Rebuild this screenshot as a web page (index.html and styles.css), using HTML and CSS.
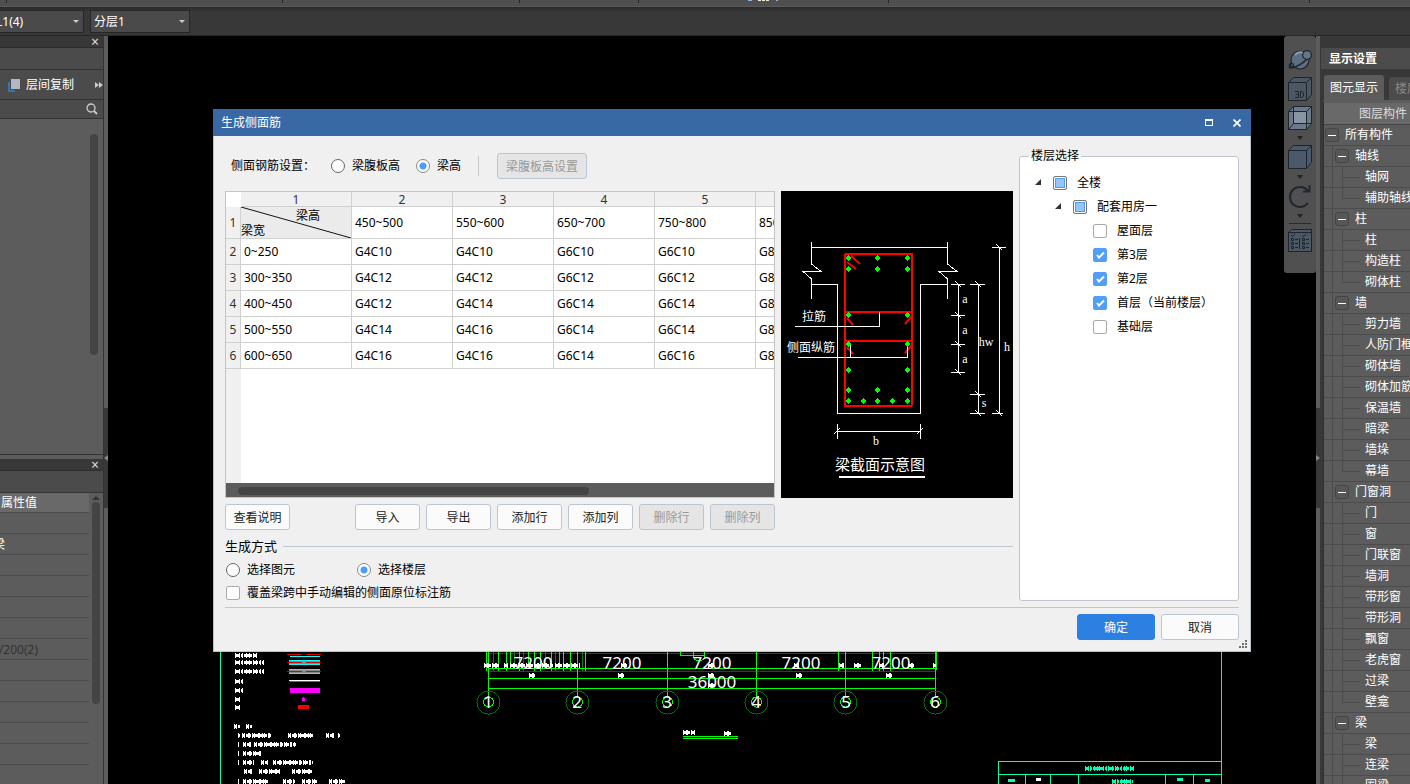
FILE: index.html
```html
<!DOCTYPE html>
<html lang="zh-CN">
<head>
  <meta charset="UTF-8">
  <title>生成侧面筋</title>
  <link rel="stylesheet" href="styles.css">
</head>
<body>

  <!-- Ribbon edge -->
  <div class="ribbon">
    <svg width="1410" height="7" shape-rendering="crispEdges">
      <path d="M6.5 0V3M282.5 0V3M519.5 0V3M638.5 0V3M888.5 0V3M1309.5 0V3" stroke="#222"/>
      <path d="M748 .5H752M776 .5H778" stroke="#8fb8dc"/>
      <path d="M758 .5H770" stroke="#f4ead0" stroke-dasharray="3 1"/>
    </svg>
  </div>

  <!-- Toolbar -->
  <div class="toolbar">
    <select class="tool-select" aria-label="构件">
      <option>L1(4)</option>
    </select>
    <select class="tool-select layer" aria-label="分层">
      <option>分层1</option>
    </select>
  </div>

  <div class="workspace">

    <!-- Left panels -->
    <aside class="left-side">
      <section class="component-panel">
        <div class="panel-bar"><button class="panel-close" aria-label="关闭">×</button></div>
        <div class="panel-strip"></div>
        <div class="copy-row">
          <button class="copy-btn">
            <svg width="12" height="14" viewBox="0 0 12 14">
              <path d="M1 4V13H7" fill="none" stroke="#3b73ad" stroke-width="2"/>
              <rect x="3" y="1" width="9" height="10" fill="#b4b6c2"/>
            </svg>
            层间复制
          </button>
          <button class="more-btn" aria-label="更多">
            <svg width="8" height="6" viewBox="0 0 8 6"><path d="M0 0L4 3L0 6ZM4 0L8 3L4 6Z" fill="#ccc"/></svg>
          </button>
        </div>
        <div class="search-row">
          <button class="search-btn" aria-label="搜索">
            <svg width="12" height="12" viewBox="0 0 12 12">
              <circle cx="5" cy="5" r="4" fill="none" stroke="#ccc" stroke-width="1.3"/>
              <path d="M8 8L11 11" stroke="#ccc" stroke-width="1.8"/>
            </svg>
          </button>
        </div>
        <div class="component-list"><div class="v-thumb"></div></div>
      </section>

      <section class="property-panel">
        <div class="panel-bar"><button class="panel-close" aria-label="关闭">×</button></div>
        <div class="panel-strip"></div>
        <div class="property-body">
          <ul class="property-list">
            <li class="property-head">属性值</li>
            <li></li>
            <li class="cut-name">梁</li>
            <li></li>
            <li></li>
            <li></li>
            <li></li>
            <li class="cut-value">/200(2)</li>
            <li></li>
            <li></li>
            <li></li>
            <li></li>
            <li></li>
            <li></li>
          </ul>
          <div class="property-scroll">
            <svg width="8" height="4" viewBox="0 0 8 4"><path d="M0 4L4 0L8 4Z" fill="#333"/></svg>
            <div class="v-thumb"></div>
          </div>
        </div>
      </section>
    </aside>

    <div class="splitter">
      <div class="grip">
        <svg width="4" height="6" viewBox="0 0 4 6"><path d="M4 0L0 3L4 6Z" fill="#888"/></svg>
      </div>
    </div>

    <!-- Drawing area -->
    <main class="canvas">
      <svg class="drawing" viewBox="108 36 1208 748" preserveAspectRatio="xMinYMin slice" shape-rendering="crispEdges" fill="none">
        <defs>
          <path id="notes" d="M234 726.5H240M246 726.5H252M238 735.5H240M242 735.5H271M288 735.5H313M326 735.5H334M338 735.5H340M238 744.5H239M243 744.5H251M254 744.5H296M238 753.5H239M243 753.5H261M238 762.5H239M243 762.5H254M261 762.5H268M273 762.5H313M244 771.5H252M259 771.5H280M292 771.5H312M238 781H239M243 781H269M283 781H295M302 781H317M329 781H345"/>
          <path id="legend" d="M235 655H257M235 662H264M235 671H264M235 681H244M235 690H244M235 699H240M235 707H241"/>
          <path id="dims" d="M484 665H500M504 665H508M510 665H553M555 665H580M621 665H627M708 665H714M794 665H799M839 665H844M854 665H861M879 665H884M908 665H914M933 665H936M708 685H716M529 675H535M618 675H624M708 675H714M796 675H802M886 675H892M683 732H695M724 733H732"/>
        </defs>

        <!-- sheet frame and title block -->
        <path d="M220.5 640V790M1221.5 640V790M998.5 790V761.5H1221M998 774.5H1221M1025.5 775V790M1050.5 775V790M1078.5 775V790M1165.5 775V790M1193.5 775V790" stroke="#00ffb8"/>
        <g stroke="#00ffb8">
          <path d="M1085 768H1135M1112 781H1133" stroke-width="3" stroke-dasharray="4 1 2 1 6 1"/>
          <path d="M1085 768H1135M1112 781H1133" stroke-width="5" stroke-dasharray="1 2 1 1 1 3"/>
          <path d="M1008 780H1015M1177 779H1183M1205 780H1210" stroke-width="3"/>
        </g>
        <path d="M1036 779.5H1041" stroke="#fff" stroke-width="3"/>

        <!-- axis grid -->
        <path d="M488 653.5H936M488 671.5H936" stroke="#006000"/>
        <path d="M493.5 640V671M514.5 640V668M523.5 640V671M545.5 640V668M555.5 640V671M582.5 640V671" stroke="#008000"/>
        <path d="M486.5 640V671M498.5 640V671M506.5 640V671M510.5 640V668M519.5 640V671M528.5 640V668M534.5 640V671M540.5 640V671M551.5 640V671M559.5 640V668M563.5 640V671M570.5 640V671M585.5 640V671M838.5 640V671M872.5 640V671M879.5 640V671M883.5 640V671M890.5 640V671" stroke="#0f0"/>
        <path d="M488 668.5H937M488 678.5H936M488 688.5H936M488.5 640V697M577.5 640V697M667.5 640V697M756.5 640V697M845.5 640V697M935.5 640V697" stroke="#0f0"/>
        <path d="M936 640V670" stroke="#0f0" stroke-width="2"/>
        <path d="M680.5 645V655.5H705" stroke="#0f0"/>
        <circle cx="699" cy="655" r="6" stroke="#0f0"/>
        <g stroke="#007000">
          <circle cx="488.500" cy="702.500" r="11.500"/><circle cx="577.500" cy="702.500" r="11.500"/><circle cx="667.500" cy="702.500" r="11.500"/>
          <circle cx="756.500" cy="702.500" r="11.500"/><circle cx="845.500" cy="702.500" r="11.500"/><circle cx="935.500" cy="702.500" r="11.500"/>
        </g>
        <g stroke="#0f0">
          <circle cx="488.500" cy="702" r="5"/><circle cx="577.500" cy="702" r="5"/><circle cx="667.500" cy="702" r="5"/>
          <circle cx="756.500" cy="702" r="5"/><circle cx="845.500" cy="702" r="5"/><circle cx="935.500" cy="702" r="5"/>
        </g>
        <g stroke="#fff">
          <use href="#dims" stroke-width="3" stroke-dasharray="4 1 2 1"/>
          <use href="#dims" stroke-width="5" stroke-dasharray="1 2 2 3"/>
        </g>
        <g class="axis-text">
          <text x="533" y="669">7200</text><text x="622" y="669">7200</text><text x="712" y="669">7200</text>
          <text x="801" y="669">7200</text><text x="891" y="669">7200</text><text x="712" y="688">36000</text>
          <text x="488" y="708">1</text><text x="577" y="708">2</text><text x="667" y="708">3</text>
          <text x="756" y="708">4</text><text x="846" y="708">5</text><text x="935" y="708">6</text>
        </g>
        <path d="M683 736.5H738M683 738.5H738" stroke="#0f0"/>

        <!-- legend -->
        <g stroke="#fff">
          <use href="#legend" stroke-width="3" stroke-dasharray="5 1 2 1"/>
          <use href="#legend" stroke-width="5" stroke-dasharray="1 3 1 2"/>
        </g>
        <path d="M289 662H320M289 671H320" stroke="#888" stroke-width="3"/>
        <path d="M290 656.5H320M289 660H320M289 664.5H320M289 669H320M289 673.5H320" stroke="#0ff"/>
        <path d="M287 654.5H322M287 662.5H322M287 671.5H322" stroke="#e00000" stroke-dasharray="15 4"/>
        <path d="M289 680.5H320" stroke="#fff"/>
        <path d="M290 681.5H320" stroke="#f0f"/>
        <path d="M290 690.5H320" stroke="#f0f" stroke-width="5"/>
        <path d="M302 699.5H305" stroke="#f0f" stroke-width="3"/>
        <path d="M303.5 697V699" stroke="#f0f"/>
        <path d="M298 707H309" stroke="#f00" stroke-width="4"/>
        <path d="M304 707.5H307" stroke="#500"/>

        <!-- notes -->
        <g stroke="#fff">
          <use href="#notes" stroke-width="3" stroke-dasharray="3 1 5 1 2 1"/>
          <use href="#notes" stroke-width="5" stroke-dasharray="1 1 1 3 2 2"/>
        </g>
      </svg>

      <!-- View tools -->
      <div class="view-tools">
        <button aria-label="动态观察">
          <svg width="24" height="24" viewBox="0 0 24 24" fill="#4e5f70" stroke="#1d242b" stroke-width="1.2">
            <circle cx="12" cy="12" r="9" fill="#5c6e80"/>
            <path d="M7 7Q11 3 15 5" stroke="#8d9baa" fill="none" stroke-width="2"/>
            <path d="M3 15Q-1 20 4 20Q12 18 19 11" fill="none" stroke-width="1.6"/>
            <circle cx="19" cy="7" r="4.300" fill="#64778a"/>
            <circle cx="4" cy="17" r="1.500"/>
          </svg>
        </button>
        <button aria-label="三维">
          <svg width="24" height="24" viewBox="0 0 24 24" fill="#4b5762" stroke="#1d242b">
            <path d="M.5 5.500L5.500 .5H23.500V17.500L18.500 23.500H.5Z"/>
            <path d="M.5 5.500H18.500V23.500M18.500 5.500L23.500 .5" fill="none"/>
            <path d="M7 14.500H10.500V20.500H7M8 17.500H10.500M12.500 14.500V20.500H14L15.500 19V16L14 14.500Z" fill="none"/>
          </svg>
        </button>
        <button aria-label="透视">
          <svg width="24" height="24" viewBox="0 0 24 24" fill="#8795a5" stroke="#1d242b">
            <path d="M.5 5.500L5.500 .5H23.500V17.500L18.500 23.500H.5Z" fill="#6b7a8a"/>
            <path d="M5.500 5.500H18.500V17.500H5.500Z" stroke="none"/>
            <path d="M.5 5.500H18.500V23.500M18.500 5.500L23.500 .5M5.500 .5V17.500H23.500M5.500 17.500L.5 23.500" fill="none"/>
          </svg>
          <svg class="drop" width="6" height="4" viewBox="0 0 6 4"><path d="M0 0H6L3 4Z" fill="#222"/></svg>
        </button>
        <button aria-label="实体">
          <svg width="24" height="24" viewBox="0 0 24 24" fill="#4b5a6b" stroke="#1d242b">
            <path d="M.5 5.500L5.500 .5H23.500V17.500L18.500 23.500H.5Z"/>
            <path d="M.5 5.500H18.500V23.500M18.500 5.500L23.500 .5" fill="none"/>
          </svg>
          <svg class="drop" width="6" height="4" viewBox="0 0 6 4"><path d="M0 0H6L3 4Z" fill="#222"/></svg>
        </button>
        <button aria-label="旋转">
          <svg width="24" height="24" viewBox="0 0 24 24" fill="none" stroke="#1f262d" stroke-width="2">
            <path d="M20 19A10 10 0 1 1 20 7"/>
            <path d="M15 7.500H21.500V1"/>
          </svg>
          <svg class="drop" width="6" height="4" viewBox="0 0 6 4"><path d="M0 0H6L3 4Z" fill="#222"/></svg>
        </button>
        <hr>
        <button aria-label="显示列表">
          <svg width="24" height="24" viewBox="0 0 24 24" fill="#4b5762" stroke="#1d242b">
            <path d="M.5 3.500L3.500 .5H23.500V22.500H.5ZM.5 3.500H23.500"/>
            <path d="M3.500 9.500H5.500V11.500H3.500ZM3.500 13.500H5.500V15.500H3.500ZM3.500 17.500H5.500V19.500H3.500ZM14.500 9.500H16.500V11.500H14.500ZM14.500 13.500H16.500V15.500H14.500ZM14.500 17.500H16.500V19.500H14.500ZM7 10.500H10M7 14.500H10M7 18.500H10M18 10.500H21M18 14.500H21M18 18.500H21M11.500 9V20M3 6L4.500 7.500L7 5M14 6L15.500 7.500L18 5" fill="none"/>
          </svg>
        </button>
      </div>

      <!-- Dialog -->
      <div class="dialog" role="dialog" aria-label="生成侧面筋">
        <header class="dialog-title">
          <span>生成侧面筋</span>
          <div class="window-btns">
            <button aria-label="最大化"><svg width="8" height="7" viewBox="0 0 8 7" shape-rendering="crispEdges"><path d="M.5 0V6.500H7.500V0" fill="none" stroke="#fff"/><path d="M0 1H8" stroke="#fff" stroke-width="2"/></svg></button>
            <button aria-label="关闭"><svg width="8" height="8" viewBox="0 0 8 8"><path d="M.5 .5L7.500 7.500M7.500 .5L.5 7.500" stroke="#fff" stroke-width="1.700"/></svg></button>
          </div>
        </header>

        <form class="dialog-body">
          <div class="columns">
            <div class="settings">
              <div class="mode-row">
                <span class="mode-label">侧面钢筋设置：</span>
                <label><input type="radio" name="mode">梁腹板高</label>
                <label><input type="radio" name="mode" checked>梁高</label>
                <span class="divider"></span>
                <button type="button" class="btn wide" disabled>梁腹板高设置</button>
              </div>

              <div class="table-row">
                <div class="table-box">
                  <div class="table-view">
                    <table>
                      <thead>
                        <tr><th class="corner"></th><th>1</th><th>2</th><th>3</th><th>4</th><th>5</th><th>6</th></tr>
                      </thead>
                      <tbody>
                        <tr class="range-row">
                          <th>1</th>
                          <td class="split-cell">
                            <svg viewBox="0 0 110 31" preserveAspectRatio="none"><path d="M0 0L110 31" stroke="#111"/></svg>
                            <span class="split-top">梁高</span><span class="split-bottom">梁宽</span>
                          </td>
                          <td>450~500</td><td>550~600</td><td>650~700</td><td>750~800</td><td>850~900</td>
                        </tr>
                        <tr><th>2</th><td>0~250</td><td>G4C10</td><td>G4C10</td><td>G6C10</td><td>G6C10</td><td>G8C10</td></tr>
                        <tr><th>3</th><td>300~350</td><td>G4C12</td><td>G4C12</td><td>G6C12</td><td>G6C12</td><td>G8C12</td></tr>
                        <tr><th>4</th><td>400~450</td><td>G4C12</td><td>G4C14</td><td>G6C14</td><td>G6C14</td><td>G8C14</td></tr>
                        <tr><th>5</th><td>500~550</td><td>G4C14</td><td>G4C16</td><td>G6C14</td><td>G6C14</td><td>G8C14</td></tr>
                        <tr><th>6</th><td>600~650</td><td>G4C16</td><td>G4C16</td><td>G6C14</td><td>G6C16</td><td>G8C16</td></tr>
                      </tbody>
                    </table>
                  </div>
                  <div class="h-scroll"><div class="h-thumb"></div></div>
                </div>

                <svg class="section-view" width="232" height="307" viewBox="0 0 232 307" fill="none" shape-rendering="crispEdges">
                  <rect width="232" height="307" fill="#000"/>
                  <g stroke="#fff">
                    <path d="M30.500 51V73L40 80.500H22L30.500 88V108M166.500 51V73L176 80.500H158L166.500 88V108"/>
                    <path d="M30 56.500H166M30 93.500H56.500V222.500H139.500V93.500H166"/>
                  </g>
                  <g stroke="#f00" stroke-width="2">
                    <rect x="64" y="63" width="67" height="152" rx="1"/>
                    <path d="M64 121H131M64 150H131"/>
                    <path d="M66 71L75 78M70 65L79 73M66 127L72 134M130 126L124 133M66 156L72 163M130 155L124 162" shape-rendering="auto"/>
                  </g>
                  <g fill="#0f0">
                    <path d="M67 64L70 67L67 70L64 67ZM96 64L99 67L96 70L93 67ZM126 64L129 67L126 70L123 67Z"/>
                    <path d="M67 75L70 78L67 81L64 78ZM96 75L99 78L96 81L93 78ZM126 75L129 78L126 81L123 78Z"/>
                    <path d="M67 121L70 124L67 127L64 124ZM126 121L129 124L126 127L123 124Z"/>
                    <path d="M67 150L70 153L67 156L64 153ZM126 150L129 153L126 156L123 153Z"/>
                    <path d="M67 176L70 179L67 182L64 179ZM126 176L129 179L126 182L123 179Z"/>
                    <path d="M67 196L70 199L67 202L64 199ZM96 196L99 199L96 202L93 199ZM126 196L129 199L126 202L123 199Z"/>
                    <path d="M67 207L70 210L67 213L64 210ZM82 207L85 210L82 213L79 210ZM96 207L99 210L96 213L93 210ZM111 207L114 210L111 213L108 210ZM126 207L129 210L126 213L123 210Z"/>
                  </g>
                  <g stroke="#fff">
                    <path d="M14 135.500H98.500V121M17 166.500H126.500V156M69.500 166V154"/>
                    <path d="M57 240.500H140M56.500 233V248M139.500 233V248M53 243L59 237M136 243L142 237"/>
                    <path d="M177.500 93V181M170 93.500H184M170 124.500H184M170 153.500H184M170 181.500H184"/>
                    <path d="M197.500 93V222M189 93.500H204M189 203.500H204M189 222.500H204M218.500 56V222M211 56.500H225M211 222.500H222"/>
                    <path d="M174 90L180 96M174 121L180 127M174 150L180 156M174 178L180 184M194 90L200 96M194 200L200 206M194 219L200 225M215 53L221 59M215 219L221 225"/>
                    <path d="M58 286H144" stroke-width="2"/>
                  </g>
                  <g class="section-cn">
                    <text x="21" y="130">拉筋</text>
                    <text x="6" y="161">侧面纵筋</text>
                    <text class="section-title" x="54" y="279">梁截面示意图</text>
                  </g>
                  <g class="section-dim">
                    <text x="184" y="112">a</text><text x="184" y="143">a</text><text x="184" y="172">a</text>
                    <text x="205" y="155">hw</text><text x="226" y="160">h</text><text x="203" y="216">s</text><text x="95" y="254">b</text>
                  </g>
                </svg>
              </div>

              <div class="btn-row">
                <button type="button" class="btn help">查看说明</button>
                <button type="button" class="btn">导入</button>
                <button type="button" class="btn">导出</button>
                <button type="button" class="btn">添加行</button>
                <button type="button" class="btn">添加列</button>
                <button type="button" class="btn" disabled>删除行</button>
                <button type="button" class="btn" disabled>删除列</button>
              </div>

              <div class="group-title">生成方式</div>
              <div class="way-row">
                <label><input type="radio" name="way">选择图元</label>
                <label><input type="radio" name="way" checked>选择楼层</label>
              </div>
              <label class="cover-row"><input type="checkbox">覆盖梁跨中手动编辑的侧面原位标注筋</label>
            </div>

            <fieldset class="floors">
              <legend>楼层选择</legend>
              <div class="floor depth-0"><span class="arrow"></span><label><input type="checkbox" class="partial">全楼</label></div>
              <div class="floor depth-1"><span class="arrow"></span><label><input type="checkbox" class="partial">配套用房一</label></div>
              <div class="floor depth-2"><label><input type="checkbox">屋面层</label></div>
              <div class="floor depth-2"><label><input type="checkbox" checked>第3层</label></div>
              <div class="floor depth-2"><label><input type="checkbox" checked>第2层</label></div>
              <div class="floor depth-2"><label><input type="checkbox" checked>首层（当前楼层）</label></div>
              <div class="floor depth-2"><label><input type="checkbox">基础层</label></div>
            </fieldset>
          </div>

          <footer class="dialog-footer">
            <button type="submit" class="btn action primary">确定</button>
            <button type="button" class="btn action">取消</button>
          </footer>
        </form>
        <svg class="resize-grip" width="8" height="8" viewBox="0 0 8 8" fill="#6d7078" shape-rendering="crispEdges">
          <path d="M6 0H8V2H6ZM3 3H5V5H3ZM6 3H8V5H6ZM0 6H2V8H0ZM3 6H5V8H3ZM6 6H8V8H6Z"/>
        </svg>
      </div>
    </main>

    <div class="splitter">
      <div class="grip">
        <svg width="4" height="6" viewBox="0 0 4 6"><path d="M0 0L4 3L0 6Z" fill="#888"/></svg>
      </div>
    </div>

    <!-- Display settings -->
    <aside class="display-panel">
      <h2>显示设置</h2>
      <div class="tabs">
        <button class="tab active">图元显示</button>
        <button class="tab">楼层显示</button>
      </div>
      <div class="layer-tree">
        <div class="tree-head">图层构件</div>
        <div class="node root"><button class="toggle" aria-label="折叠"></button>所有构件</div>
        <div class="node group"><button class="toggle" aria-label="折叠"></button>轴线</div>
        <div class="node leaf">轴网</div>
        <div class="node leaf last">辅助轴线</div>
        <div class="node group"><button class="toggle" aria-label="折叠"></button>柱</div>
        <div class="node leaf">柱</div>
        <div class="node leaf">构造柱</div>
        <div class="node leaf last">砌体柱</div>
        <div class="node group"><button class="toggle" aria-label="折叠"></button>墙</div>
        <div class="node leaf">剪力墙</div>
        <div class="node leaf">人防门框墙</div>
        <div class="node leaf">砌体墙</div>
        <div class="node leaf">砌体加筋</div>
        <div class="node leaf">保温墙</div>
        <div class="node leaf">暗梁</div>
        <div class="node leaf">墙垛</div>
        <div class="node leaf last">幕墙</div>
        <div class="node group"><button class="toggle" aria-label="折叠"></button>门窗洞</div>
        <div class="node leaf">门</div>
        <div class="node leaf">窗</div>
        <div class="node leaf">门联窗</div>
        <div class="node leaf">墙洞</div>
        <div class="node leaf">带形窗</div>
        <div class="node leaf">带形洞</div>
        <div class="node leaf">飘窗</div>
        <div class="node leaf">老虎窗</div>
        <div class="node leaf">过梁</div>
        <div class="node leaf last">壁龛</div>
        <div class="node group"><button class="toggle" aria-label="折叠"></button>梁</div>
        <div class="node leaf">梁</div>
        <div class="node leaf">连梁</div>
        <div class="node leaf">圈梁</div>
      </div>
    </aside>
  </div>

</body>
</html>
```

FILE: styles.css
```css
* {
  box-sizing: border-box;
}

body {
  margin: 0;
  height: 100vh;
  display: flex;
  flex-direction: column;
  overflow: hidden;
  background-color: #383838;
  color: #fff;
  font-family: "Noto Sans", "Noto Sans CJK SC", sans-serif;
  font-size: 12px;
  line-height: 16px;
}

button,
input,
select {
  font: inherit;
  color: inherit;
  margin: 0;
}

button {
  padding: 0;
  border: none;
  background: none;
}

svg {
  display: block;
  flex-shrink: 0;
}

ul {
  list-style: none;
  margin: 0;
  padding: 0;
}

/* Ribbon and toolbar */
.ribbon {
  height: 7px;
  background-color: #4f4f4f;
  border-bottom: 1px solid #5c5c5c;
  overflow: hidden;
}

.toolbar {
  height: 29px;
  display: flex;
  align-items: center;
  gap: 6px;
  margin-left: -8px;
  padding-top: 1px;
  border-bottom: 1px solid #262626;
  background: linear-gradient(#2a2a2a, #383838 5px);
}

.tool-select {
  appearance: none;
  width: 92px;
  height: 23px;
  padding: 0 3px;
  border: 1px solid #262626;
  border-radius: 0;
  background: #4a4a4a url("data:image/svg+xml,%3Csvg xmlns='http://www.w3.org/2000/svg' width='6' height='3'%3E%3Cpath d='M0 0H6L3 3Z' fill='%23ccc'/%3E%3C/svg%3E") no-repeat right 4px center;
}

.tool-select.layer {
  width: 100px;
}

.workspace {
  flex: 1;
  display: flex;
  min-height: 0;
}

/* Left panels */
.left-side {
  width: 104px;
  display: flex;
  flex-direction: column;
  background-color: #5c5c5c;
  border-right: 1px solid #333;
}

.component-panel {
  flex: 420;
  display: flex;
  flex-direction: column;
  border-bottom: 1px solid #333;
}

.property-panel {
  flex: 326;
  display: flex;
  flex-direction: column;
  margin-top: 4px;
  min-height: 0;
}

.panel-bar {
  height: 12px;
  display: flex;
  align-items: center;
  justify-content: flex-end;
  padding-right: 4px;
  background-color: #383838;
  border-bottom: 1px solid #2c2c2c;
}

.panel-close {
  color: #ddd;
  font-size: 14px;
  line-height: 12px;
}

.panel-strip {
  height: 22px;
  background-color: #4b4b4b;
  border-bottom: 1px solid #333;
}

.copy-row {
  height: 30px;
  display: flex;
  align-items: center;
  justify-content: space-between;
  padding-left: 8px;
  background-color: #4b4b4b;
  border-bottom: 1px solid #333;
}

.copy-btn {
  display: flex;
  align-items: center;
  gap: 6px;
}

.search-row {
  height: 19px;
  display: flex;
  align-items: center;
  justify-content: flex-end;
  padding-right: 5px;
  background-color: #4b4b4b;
  border-bottom: 1px solid #333;
}

.component-list {
  flex: 1;
  display: flex;
  justify-content: flex-end;
  padding: 15px 5px 0 0;
}

.v-thumb {
  width: 8px;
  height: 69%;
  border-radius: 4px;
  background-color: #444;
}

.property-body {
  flex: 1;
  display: flex;
  justify-content: space-between;
  min-height: 0;
  overflow: hidden;
}

.property-list {
  width: 89px;
}

.property-list li {
  height: 21px;
  display: flex;
  align-items: center;
  padding-top: 1px;
  border-bottom: 1px solid #4c4c4c;
}

.property-list .property-head {
  height: 20px;
  padding-left: 1px;
  background-color: #696969;
}

.property-list .cut-name {
  justify-content: flex-end;
  padding-right: 84px;
}

.property-list .cut-value {
  justify-content: flex-end;
  padding-right: 51px;
  color: #333;
}

.property-scroll {
  padding: 3px 3px 0 0;
  display: flex;
  flex-direction: column;
  gap: 2px;
}

.property-scroll .v-thumb {
  height: 70%;
}

/* Splitters */
.splitter {
  width: 4px;
  display: flex;
  flex-direction: column;
  justify-content: center;
  background-color: #5c5c5c;
}

.grip {
  height: 100px;
  display: flex;
  align-items: center;
  background-color: #383838;
  margin-top: 96px;
}

/* Drawing area */
.canvas {
  flex: 1;
  position: relative;
  min-width: 0;
  overflow: hidden;
  background-color: #000;
}

.drawing {
  position: absolute;
  inset: 0;
  width: 100%;
  height: 100%;
}

.axis-text {
  fill: #fff;
  font-size: 17px;
  text-anchor: middle;
}

.view-tools {
  position: absolute;
  top: 0;
  right: 0;
  width: 32px;
  display: flex;
  flex-direction: column;
  align-items: center;
  gap: 5px;
  padding: 12px 0 20px;
  border-radius: 3px;
  background-color: #505050;
}

.view-tools .drop {
  margin: 6px auto 0;
}

.view-tools hr {
  width: 22px;
  margin: 0;
  border: none;
  border-top: 1px solid #2a2a2a;
}

/* Dialog */
.dialog {
  position: absolute;
  top: 73px;
  left: 105px;
  right: 65px;
  color: #000;
  background-color: #f0f0f0;
  border: 1px solid #b9c2d3;
  border-top: none;
}

.dialog-title {
  height: 27px;
  display: flex;
  align-items: center;
  justify-content: space-between;
  margin: 0 -1px;
  padding: 0 10px 0 8px;
  color: #fff;
  background-color: #3869a5;
}

.window-btns {
  display: flex;
  align-items: center;
  gap: 20px;
}

.dialog-body {
  padding: 12px 11px 11px;
}

.columns {
  display: flex;
  gap: 6px;
  padding-bottom: 6px;
  border-bottom: 1px solid #bcc5d4;
}

.settings {
  flex: 1;
  min-width: 0;
}

.dialog label {
  display: flex;
  align-items: center;
  gap: 7px;
}

.mode-row {
  height: 36px;
  display: flex;
  align-items: center;
  padding: 0 0 0 6px;
}

.mode-label {
  width: 100px;
}

.mode-row label + label {
  margin-left: 16px;
}

.divider {
  width: 1px;
  height: 20px;
  margin: 0 18px 0 17px;
  background-color: #c8c8c8;
}

.dialog input {
  appearance: none;
  width: 14px;
  height: 14px;
  background-color: #fff;
  border: 1px solid #aaa;
  border-radius: 2px;
}

.dialog input[type="radio"] {
  border-color: #666;
  border-radius: 50%;
}

.dialog input[type="radio"]:checked {
  border-color: #888;
  background-image: radial-gradient(circle, #4c9cfa 3px, transparent 4px);
}

.dialog input[type="checkbox"]:checked {
  border-color: #529ffb;
  background: #529ffb url("data:image/svg+xml,%3Csvg xmlns='http://www.w3.org/2000/svg' width='12' height='12'%3E%3Cpath d='M3 6L5 8.500L10 3.500' fill='none' stroke='%23fff' stroke-width='2'/%3E%3C/svg%3E");
}

.dialog input.partial {
  border-color: #777;
  background-color: #96c5fd;
  box-shadow: inset 0 0 0 1px #fff, inset 0 0 0 2px #4c9cfa;
}

.btn {
  width: 65px;
  height: 26px;
  padding-top: 2px;
  color: #222;
  background-color: #fbfbfb;
  border: 1px solid #bcc5d6;
  border-radius: 3px;
}

.btn:disabled {
  color: #999;
  background-color: #e5e5e5;
}

.btn.wide {
  width: 90px;
}

/* Rebar table */
.table-row {
  display: flex;
  gap: 6px;
  margin-top: 7px;
}

.table-box {
  flex: 1;
  min-width: 0;
  display: flex;
  flex-direction: column;
  border: 1px solid #c4c4c4;
}

.table-view {
  flex: 1;
  overflow: hidden;
  background: linear-gradient(to right, #f0f0f0 15px, #fff 15px);
}

table {
  width: 631px;
  table-layout: fixed;
  border-collapse: separate;
  border-spacing: 0;
}

th,
td {
  height: 26px;
  padding: 0 3px;
  border-right: 1px solid #d0d0d0;
  border-bottom: 1px solid #d0d0d0;
  background-color: #fff;
  text-align: left;
}

th {
  width: 101px;
  padding: 1px 0 0;
  background-color: #f0f0f0;
  color: #333;
  font-weight: normal;
  text-align: center;
}

thead th {
  height: 15px;
  line-height: 13px;
}

thead th:nth-child(2) {
  width: 111px;
}

th.corner {
  width: 15px;
  border: none;
  background-color: #fff;
}

.range-row td,
.range-row th {
  height: 32px;
}

td.split-cell {
  position: relative;
  padding: 0;
  background-color: #ebebeb;
}

.split-cell svg {
  position: absolute;
  inset: 0;
  width: 100%;
  height: 100%;
}

.split-cell span {
  display: block;
  line-height: 15px;
}

.split-top {
  padding-left: 55px;
}

.h-scroll {
  height: 14px;
  padding: 4px 12px;
  background-color: #5c5c5c;
}

.h-thumb {
  width: 67%;
  height: 8px;
  border-radius: 4px;
  background-color: #444;
}

.section-cn {
  fill: #fff;
}

.section-title {
  font-size: 15px;
}

.section-dim {
  fill: #fff;
  font-family: "Liberation Serif", serif;
  text-anchor: middle;
}

.btn-row {
  display: flex;
  gap: 6px;
  margin-top: 6px;
}

.btn.help {
  margin-right: 59px;
}

.group-title {
  display: flex;
  align-items: center;
  gap: 6px;
  margin-top: 8px;
  font-size: 13px;
}

.group-title::after {
  content: "";
  flex: 1;
  height: 1px;
  background-color: #bcc5d4;
}

.way-row {
  display: flex;
  margin-top: 8px;
  padding-left: 1px;
}

.way-row label {
  width: 131px;
}

.cover-row {
  margin-top: 7px;
  padding-left: 1px;
}

/* Floor tree */
.floors {
  width: 220px;
  margin: 0;
  padding: 7px 13px;
  border: 1px solid #c0c4cc;
  border-radius: 3px;
  background-color: #fff;
}

.floors legend {
  margin-left: -4px;
  padding: 0 2px;
  background: linear-gradient(#f0f0f0 8px, #fff 8px);
}

.floor {
  height: 24px;
  display: flex;
  align-items: center;
  gap: 11px;
}

.floor label {
  gap: 10px;
}

.depth-1 {
  padding-left: 20px;
}

.depth-2 {
  padding-left: 60px;
}

.arrow {
  margin: 0 1px 3px 2px;
  border-left: 6px solid transparent;
  border-bottom: 6px solid #333;
}

.dialog-footer {
  display: flex;
  justify-content: flex-end;
  gap: 6px;
  padding-top: 6px;
}

.btn.action {
  width: 78px;
}

.btn.primary {
  color: #fff;
  background-color: #2c80e2;
  border-color: #2c80e2;
}

.resize-grip {
  position: absolute;
  right: 3px;
  bottom: 3px;
}

/* Display settings */
.display-panel {
  width: 90px;
  display: flex;
  flex-direction: column;
  padding: 12px 0 0 1px;
  overflow: hidden;
  background-color: #383838;
}

.display-panel h2 {
  height: 21px;
  margin: 0;
  padding-left: 8px;
  background-color: #4c4c4c;
  font-size: 12px;
  line-height: 21px;
}

.tabs {
  display: flex;
  align-items: flex-end;
  gap: 5px;
  margin: 6px 0 0 3px;
}

.tab {
  flex-shrink: 0;
  height: 23px;
  padding: 0 6px;
  border-radius: 3px 3px 0 0;
  background-color: #4b4b4b;
  color: #888;
}

.tab.active {
  height: 25px;
  background-color: #5c5c5c;
  color: #fff;
}

.layer-tree {
  flex: 1;
  margin-left: 2px;
  border-left: 1px solid #2f2f2f;
  border-top: 3px solid #5c5c5c;
  background-color: #5c5c5c;
  white-space: nowrap;
  overflow: hidden;
}

.tree-head {
  height: 22px;
  padding-left: 35px;
  border-bottom: 1px solid #444;
  background-color: #696969;
  line-height: 22px;
  color: #ddd;
}

.node {
  height: 21px;
  display: flex;
  align-items: center;
  gap: 6px;
  border-bottom: 1px solid #4c4c4c;
}

.root {
  padding-left: 1px;
}

.group {
  padding-left: 11px;
  background: linear-gradient(#4c4c4c, #4c4c4c) 8px 0 / 1px 100% no-repeat;
}

.leaf {
  padding-left: 41px;
  background:
    linear-gradient(#4c4c4c, #4c4c4c) 8px 0 / 1px 100% no-repeat,
    linear-gradient(#4c4c4c, #4c4c4c) 18px 0 / 1px 100% no-repeat,
    linear-gradient(#4c4c4c, #4c4c4c) 18px 10px / 18px 1px no-repeat;
}

.leaf.last {
  background-size: 1px 100%, 1px 10px, 18px 1px;
}

.toggle {
  width: 14px;
  height: 14px;
  border: 1px solid #444;
  border-radius: 3px;
  background: linear-gradient(#fff, #fff) center / 8px 1px no-repeat #575757;
}
```
